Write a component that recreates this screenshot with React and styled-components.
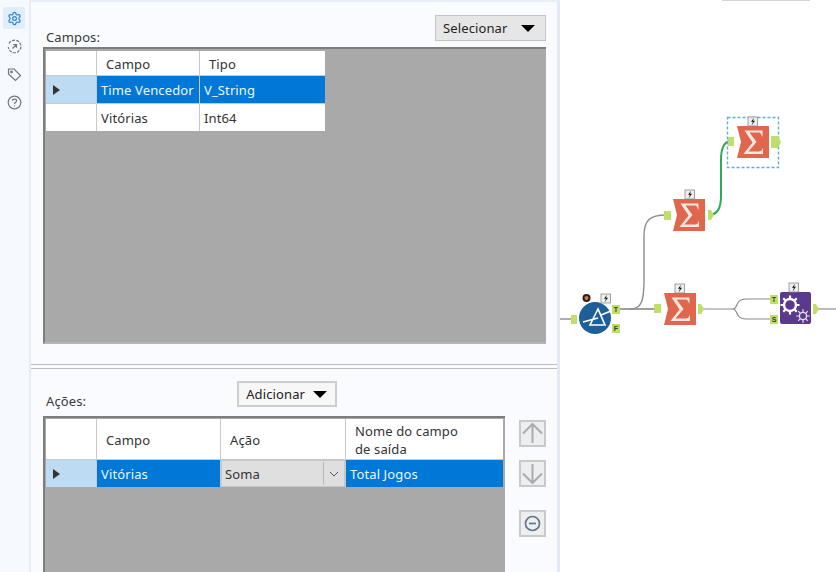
import * as React from "react";
import styled, { createGlobalStyle } from "styled-components";
import { Settings } from "lucide-react";

const GlobalStyle = createGlobalStyle`
  html, body {
    margin: 0;
    padding: 0;
    background: #fff;
    overflow: hidden;
  }
  * {
    box-sizing: border-box;
  }
`;

const Page = styled.div`
  display: flex;
  width: 836px;
  height: 572px;
  overflow: hidden;
  font: 400 13px/18px "Noto Sans", "Open Sans", sans-serif;
  letter-spacing: 0.12px;
  color: #2b2b2b;
`;

const Sidebar = styled.nav`
  width: 31px;
  flex: none;
  display: flex;
  flex-direction: column;
  align-items: center;
  gap: 6px;
  padding-top: 7px;
  background: #f6f9fd;
  border-right: 2px solid #e6edf7;
`;

const SideButton = styled.div`
  width: 22px;
  height: 22px;
  margin-left: -1px;
  display: flex;
  align-items: center;
  justify-content: center;
  border-radius: 3px;
  background: ${(p) => (p.$active ? "#e0edfb" : "transparent")};
  color: ${(p) => (p.$active ? "#2f86d4" : "#6f7785")};
`;

const Panel = styled.main`
  width: 529px;
  flex: none;
  display: flex;
  flex-direction: column;
  height: 572px;
  background: #f9fbfe;
  border-top: 2px solid #e9eff8;
  border-right: 3px solid #e3eaf5;
`;

const TopSection = styled.section`
  height: 362px;
  flex: none;
  display: flex;
  flex-direction: column;
  padding: 12px 11px 20px 12px;
`;

const SectionHead = styled.div`
  display: flex;
  justify-content: space-between;
  align-items: flex-end;
  height: 33px;
`;

const Label = styled.span`
  padding: 0 0 ${(p) => p.$lift || 1}px 3px;
  color: #3a3a3a;
  line-height: 17px;
`;

const DropButton = styled.div`
  display: flex;
  align-items: center;
  justify-content: space-between;
  align-self: flex-start;
  margin-top: ${(p) => (p.$framed ? 0 : 1)}px;
  height: 26px;
  width: ${(p) => p.$width}px;
  padding: 0 ${(p) => (p.$framed ? 8 : 10)}px 0 7px;
  background: ${(p) => (p.$framed ? "#f7f7f7" : "#e6e6e6")};
  border: ${(p) => (p.$framed ? "2px solid #cdcdcd" : "1px solid #c4c4c4")};
  color: #222;
`;

const Caret = styled.i`
  display: block;
  width: 0;
  height: 0;
  border-left: 7px solid transparent;
  border-right: 7px solid transparent;
  border-top: 7px solid #000;
`;

const GridFrame = styled.div`
  flex: 1;
  min-height: 0;
  padding: ${(p) => (p.$open ? 1 : 2)}px 0 0 1px;
  background: #a9a9a9;
  border-top: 2px solid #7d7d7d;
  border-left: 2px solid #7d7d7d;
  border-bottom: ${(p) => (p.$open ? "0" : "2px solid #b5b5b5")};
`;

const GridTable = styled.div`
  display: grid;
  grid-template-columns: ${(p) => p.$columns};
  grid-template-rows: ${(p) => p.$rows};
  width: ${(p) => p.$width}px;
  gap: 1px;
  background: #c9c9c9;
`;

const HeadCell = styled.div`
  display: flex;
  align-items: center;
  padding: 1px 9px 0;
  background: #fff;
  color: #333;
`;

const Cell = styled.div`
  display: flex;
  align-items: center;
  padding: 0 4px;
  white-space: nowrap;
  background: ${(p) => (p.$selected ? "#0078d7" : "#fff")};
  color: ${(p) => (p.$selected ? "#eef6fd" : "#333")};
`;

const RowHead = styled.div`
  display: flex;
  align-items: center;
  padding-left: 7px;
  background: ${(p) => (p.$selected ? "#bddcf3" : "#fff")};
`;

const RowArrow = styled.i`
  display: block;
  width: 0;
  height: 0;
  border-top: 5px solid transparent;
  border-bottom: 5px solid transparent;
  border-left: 7px solid #333;
`;

const ComboCell = styled.div`
  display: flex;
  align-items: stretch;
  justify-content: space-between;
  padding: 1px;
  background: #dfdfdf;
  color: #333;
  border: 1px solid #c8c8c8;
`;

const ComboText = styled.span`
  align-self: center;
  padding-left: 2px;
`;

const ComboArrow = styled.span`
  width: 20px;
  display: flex;
  align-items: center;
  justify-content: center;
  border-left: 1px solid #b9b9b9;
`;

const Divider = styled.div`
  height: 5px;
  flex: none;
  border-top: 1px solid #bdbdbd;
  border-bottom: 1px solid #bdbdbd;
`;

const BottomSection = styled.section`
  flex: 1;
  min-height: 0;
  display: flex;
  flex-direction: column;
  padding: 12px 11px 0 12px;
`;

const ActionsHead = styled.div`
  display: flex;
  align-items: flex-end;
  height: 34px;
  flex: none;
`;

const AddWrap = styled.div`
  margin-left: 151px;
  align-self: flex-start;
`;

const ActionsBody = styled.div`
  flex: 1;
  min-height: 0;
  display: flex;
  gap: 14px;
  padding-top: 1px;
`;

const MoveColumn = styled.div`
  width: 27px;
  flex: none;
  display: flex;
  flex-direction: column;
  padding-top: 4px;
`;

const MoveButton = styled.div`
  width: 27px;
  height: 27px;
  margin-bottom: ${(p) => p.$after}px;
  display: flex;
  align-items: center;
  justify-content: center;
  background: #eceef0;
  border: 2px solid #c9c9c9;
`;

const Canvas = styled.div`
  flex: 1;
  position: relative;
  background: #fff;
`;

const TopTab = styled.div`
  position: absolute;
  top: 0;
  left: 162px;
  width: 88px;
  height: 1px;
  background: #d5d5d5;
`;

const Flow = styled.svg`
  display: block;
  width: 276px;
  height: 572px;
`;

const FlowLabel = styled.text`
  font: 700 7px "Liberation Sans", sans-serif;
  letter-spacing: 0;
  fill: #33420f;
`;

const Anchor = ({ x, y, w = 8, h = 9, label }) => (
  <g>
    <rect x={x} y={y} width={w} height={h} fill="#bfdf6b" />
    <FlowLabel x={x + w / 2} y={y + h / 2 + 2.5} textAnchor="middle">{label}</FlowLabel>
  </g>
);

const OutAnchor = ({ x, y, w = 6, h = 10 }) => (
  <path d={`M${x} ${y}h${w - 3}l3 ${h / 2}l-3 ${h / 2}h-${w - 3}z`} fill="#bfdf6b" />
);

const Bolt = ({ x, y }) => (
  <g>
    <rect x={x} y={y} width="9.5" height="9" fill="#eeeeee" stroke="#8a8a8a" strokeWidth="0.8" />
    <path d={`M${x + 6} ${y + 0.8}l-3 4h2l-1.5 3.6l3.5-4.6h-2z`} fill="#111" />
  </g>
);

const SigmaNode = ({ x, y }) => (
  <g transform={`translate(${x} ${y})`}>
    <path d="M0 0H32V32H0L4 16Z" fill="#df674d" />
    <path
      d="M7.5 4.5H25.5V11L24 8C23.4 6.9 22.6 6.6 21 6.6H12.5L19.5 16L11.5 25.5H22C23.6 25.5 24.4 25 25 23.8L26 21.5V28H6.5L15.6 16.6Z"
      fill="#fbe7e1"
    />
  </g>
);

const gearPath = (cx, cy, r, teeth) => {
  const parts = [];
  for (let i = 0; i < teeth; i++) {
    const a = (i / teeth) * Math.PI * 2;
    parts.push(
      `M${cx + Math.cos(a) * r} ${cy + Math.sin(a) * r}L${cx + Math.cos(a) * (r + 3)} ${cy + Math.sin(a) * (r + 3)}`
    );
  }
  return parts.join("");
};

function Workflow() {
  return (
    <Flow viewBox="560 0 276 572">
      <path d="M560 319H572" stroke="#9a9a9a" strokeWidth="1.6" fill="none" />
      <path d="M620 309H655" stroke="#808080" strokeWidth="1.4" fill="none" />
      <path d="M630 309C642 309 644 300 644 280V236C644 220 650 215 666 215" stroke="#8c8c8c" strokeWidth="1.4" fill="none" />
      <path d="M708 215C718 215 721 208 721 195V160C721 148 724 142 730 141" stroke="#2fa95a" strokeWidth="2" fill="none" />
      <path d="M703 309H733C738 309 735 299 746 299H771" stroke="#8c8c8c" strokeWidth="1.2" fill="none" />
      <path d="M733 309C738 309 735 319 746 319H771" stroke="#8c8c8c" strokeWidth="1.2" fill="none" />
      <path d="M818 309H836" stroke="#8c8c8c" strokeWidth="1.2" fill="none" />

      {/* filter */}
      <circle cx="595" cy="318" r="16" fill="#1f5f97" />
      <path d="M583 322L598 318M598 309L590 325H605Z M601 315L611 311" stroke="#fff" strokeWidth="1.6" fill="none" />
      <circle cx="586.5" cy="298" r="4" fill="#222" />
      <circle cx="586.5" cy="298" r="2" fill="#e2793b" />
      <Bolt x={601} y={294} />
      <Anchor x={571} y={315} w={6} label="" />
      <Anchor x={612} y={305} label="T" />
      <Anchor x={612} y={324} label="F" />

      {/* summarize, left */}
      <Anchor x={664} y={211} w={7} label="" />
      <SigmaNode x={673} y={199} />
      <Bolt x={685} y={190} />
      <OutAnchor x={708} y={210} />

      {/* summarize, selected */}
      <rect x="727.5" y="117.5" width="51" height="50" fill="none" stroke="#5aaee8" strokeWidth="1.4" strokeDasharray="3 2" />
      <Anchor x={728} y={137} w={6} label="" />
      <SigmaNode x={737} y={126} />
      <Bolt x={748} y={117} />
      <OutAnchor x={771} y={136} w={10} h={12} />

      {/* summarize, middle */}
      <Anchor x={654} y={304} w={7} label="" />
      <SigmaNode x={664} y={293} />
      <Bolt x={675} y={284} />
      <OutAnchor x={698} y={304} />

      {/* macro */}
      <rect x="780" y="292" width="31" height="32" rx="2" fill="#5b3a8e" />
      <circle cx="790" cy="305" r="6" fill="none" stroke="#fff" strokeWidth="2.4" />
      <path d={gearPath(790, 305, 6.5, 8)} stroke="#fff" strokeWidth="2.2" />
      <circle cx="803" cy="316" r="3.6" fill="none" stroke="#e8e2f2" strokeWidth="1.4" />
      <path d={gearPath(803, 316, 3.8, 8)} stroke="#e8e2f2" strokeWidth="1.2" />
      <Bolt x={789} y={283} />
      <Anchor x={770} y={295} label="T" />
      <Anchor x={770} y={315} label="S" />
      <OutAnchor x={813} y={304} />
    </Flow>
  );
}

const ArrowIcon = ({ up }) => (
  <svg width="23" height="23" viewBox="0 0 23 23" fill="none" stroke="#ababab" strokeWidth="2">
    {up ? <path d="M11.5 21V2M2 11.5L11.5 2L21 11.5" /> : <path d="M11.5 2V21M2 11.5L11.5 21L21 11.5" />}
  </svg>
);

const camposRows = [
  { campo: "Time Vencedor", tipo: "V_String", selected: true },
  { campo: "Vitórias", tipo: "Int64" },
];

export default function App() {
  return (
    <Page>
      <GlobalStyle />
      <Sidebar>
        <SideButton $active>
          <Settings size={15} strokeWidth={2} />
        </SideButton>
        <SideButton>
          <svg width="15" height="15" viewBox="0 0 15 15" fill="none" stroke="currentColor" strokeWidth="1.2">
            <path d="M2 4.5A6.3 6.3 0 1 1 1.3 8" strokeDasharray="3 1.2" />
            <path d="M5.5 9.5L9.5 5.5M6.2 5.5H9.5V8.8" />
          </svg>
        </SideButton>
        <SideButton>
          <svg width="15" height="15" viewBox="0 0 15 15" fill="none" stroke="currentColor" strokeWidth="1.2">
            <path d="M1.5 2H7L13.5 8.5L8.5 13.5L1.5 7Z" />
            <circle cx="4.5" cy="5" r="0.8" />
          </svg>
        </SideButton>
        <SideButton>
          <svg width="15" height="15" viewBox="0 0 15 15" fill="none" stroke="currentColor" strokeWidth="1.2">
            <circle cx="7.5" cy="7.5" r="6.3" />
            <path d="M5.5 5.8C5.5 3.6 9.6 3.6 9.6 5.8C9.6 7.2 7.5 7.2 7.5 9" />
            <path d="M7.5 10.4V11.4" />
          </svg>
        </SideButton>
      </Sidebar>
      <Panel>
        <TopSection>
          <SectionHead>
            <Label>Campos:</Label>
            <DropButton $width={111}>
              Selecionar
              <Caret />
            </DropButton>
          </SectionHead>
          <GridFrame>
            <GridTable $columns="50px 102px 125px" $rows="24px 27px 27px" $width={279}>
              <HeadCell />
              <HeadCell>Campo</HeadCell>
              <HeadCell>Tipo</HeadCell>
              {camposRows.map((row) => (
                <React.Fragment key={row.campo}>
                  <RowHead $selected={row.selected}>{row.selected && <RowArrow />}</RowHead>
                  <Cell $selected={row.selected}>{row.campo}</Cell>
                  <Cell $selected={row.selected}>{row.tipo}</Cell>
                </React.Fragment>
              ))}
            </GridTable>
          </GridFrame>
        </TopSection>
        <Divider />
        <BottomSection>
          <ActionsHead>
            <Label $lift={5}>Ações:</Label>
            <AddWrap>
              <DropButton $framed $width={100}>
                Adicionar
                <Caret />
              </DropButton>
            </AddWrap>
          </ActionsHead>
          <ActionsBody>
            <GridFrame $open>
              <GridTable $columns="50px 123px 124px 157px" $rows="40px 27px" $width={457}>
                <HeadCell />
                <HeadCell>Campo</HeadCell>
                <HeadCell>Ação</HeadCell>
                <HeadCell>
                  <span>
                    Nome do campo
                    <br />
                    de saída
                  </span>
                </HeadCell>
                <RowHead $selected>
                  <RowArrow />
                </RowHead>
                <Cell $selected>Vitórias</Cell>
                <ComboCell>
                  <ComboText>Soma</ComboText>
                  <ComboArrow>
                    <svg width="10" height="6" viewBox="0 0 10 6" fill="none" stroke="#555" strokeWidth="1">
                      <path d="M1 1L5 5L9 1" />
                    </svg>
                  </ComboArrow>
                </ComboCell>
                <Cell $selected>Total Jogos</Cell>
              </GridTable>
            </GridFrame>
            <MoveColumn>
              <MoveButton $after={13}>
                <ArrowIcon up />
              </MoveButton>
              <MoveButton $after={23}>
                <ArrowIcon />
              </MoveButton>
              <MoveButton $after={0}>
                <svg width="17" height="17" viewBox="0 0 17 17" fill="none" stroke="#66758b" strokeWidth="1.7">
                  <circle cx="8.5" cy="8.5" r="7" />
                  <path d="M5 8.5H12" />
                </svg>
              </MoveButton>
            </MoveColumn>
          </ActionsBody>
        </BottomSection>
      </Panel>
      <Canvas>
        <TopTab />
        <Workflow />
      </Canvas>
    </Page>
  );
}
